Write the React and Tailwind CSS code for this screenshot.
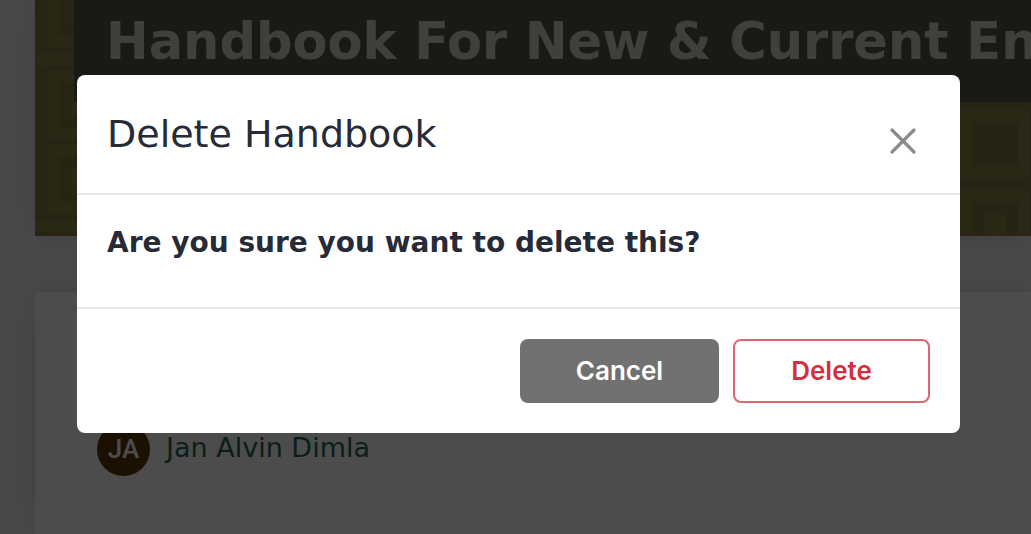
import { X } from "lucide-react";

function Weave() {
  return (
    <svg className="absolute inset-0 h-full w-full" aria-hidden="true">
      <defs>
        <pattern id="weave" x="0" y="-22" width="166" height="166" patternUnits="userSpaceOnUse">
          <rect width="166" height="166" fill="#827b42" />
          <g fill="none" stroke="#8c8546" strokeWidth="12">
            <rect x="18" y="6" width="58" height="58" />
            <rect x="42" y="30" width="10" height="10" />
            <rect x="18" y="98" width="58" height="58" />
            <rect x="42" y="122" width="10" height="10" />
            <rect x="101" y="52" width="58" height="58" />
            <rect x="125" y="76" width="10" height="10" />
            <path d="M101 0v28h58V0M101 166v-28h58v28M0 82h88" />
          </g>
        </pattern>
      </defs>
      <rect width="100%" height="100%" fill="url(#weave)" />
    </svg>
  );
}

function HandbookPage() {
  return (
    <div className="flex min-h-screen flex-col gap-14 bg-[#f5f6fc] pl-[35px]">
      <header className="relative h-[236px] overflow-hidden shadow-[0_0_36px_rgba(0,0,0,0.16)]">
        <Weave />
        <div className="relative ml-[39px] h-[102px] bg-[#50534a]/90 pl-8 pt-2.5">
          <h1 className="whitespace-nowrap text-[51px] font-bold leading-[64px] text-[#d8d6c4]">
            Handbook For New &amp; Current En
          </h1>
        </div>
      </header>
      <main className="flex-1 bg-white pl-[62px] pt-[131px] shadow-[0_0_36px_rgba(0,0,0,0.16)]">
        <div className="flex items-center gap-4">
          <span className="flex size-[53px] items-center justify-center rounded-full bg-[#5a3808] font-['Roboto',sans-serif] text-[26px] font-medium text-white">
            JA
          </span>
          <a href="#author" className="mb-1 text-[27px] leading-8 text-[#1c6a54]">
            Jan Alvin Dimla
          </a>
        </div>
      </main>
    </div>
  );
}

function DeleteDialog() {
  return (
    <div className="fixed inset-0 bg-black/70 pl-[77px] pr-[71px] pt-[75px]">
      <section
        role="dialog"
        aria-modal="true"
        aria-labelledby="dialog-title"
        className="rounded-lg bg-white text-[#272b38]"
      >
        <div className="flex items-center justify-between border-b-2 border-[#e4e9ee] py-[30px] pl-[30px] pr-[35px]">
          <h2 id="dialog-title" className="text-[38px] leading-[58px]">
            Delete Handbook
          </h2>
          <button type="button" aria-label="Close" className="mt-3.5 text-[#8a8a8a]">
            <X className="size-11" strokeWidth={1.75} aria-hidden="true" />
          </button>
        </div>
        <p className="border-b-2 border-[#e4e9ee] px-[30px] pb-11 pt-7 text-[28px] font-bold leading-10">
          Are you sure you want to delete this?
        </p>
        <div className="flex justify-end gap-3.5 p-[30px] font-['Inter',sans-serif] text-[26px] font-semibold leading-8">
          <button type="button" className="h-16 w-[199px] rounded-lg bg-[#717171] text-white">
            Cancel
          </button>
          <button
            type="button"
            className="h-16 w-[197px] rounded-lg border-2 border-[#df6570] text-[#d32f40]"
          >
            Delete
          </button>
        </div>
      </section>
    </div>
  );
}

export default function App() {
  return (
    <div className="font-['DejaVu_Sans',sans-serif]">
      <HandbookPage />
      <DeleteDialog />
    </div>
  );
}
